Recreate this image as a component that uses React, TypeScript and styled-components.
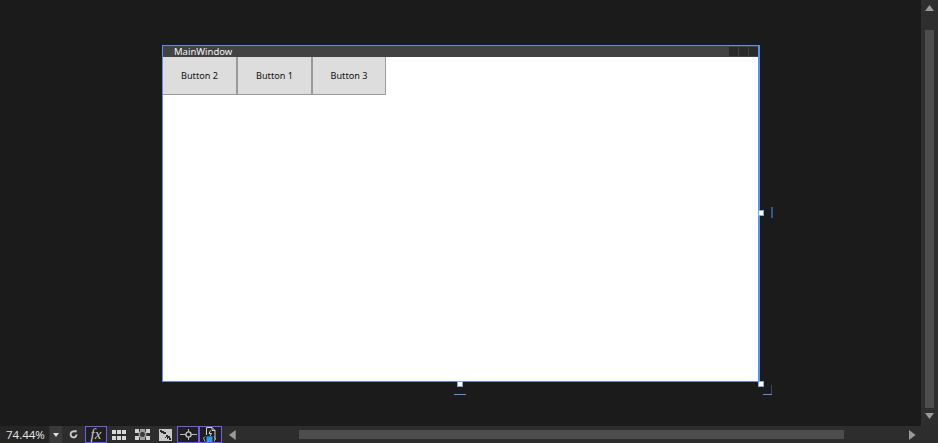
import { createGlobalStyle, styled } from "styled-components";

const GlobalStyle = createGlobalStyle`
  html, body, #root {
    margin: 0;
    height: 100%;
    overflow: hidden;
    background: #1b1b1c;
  }
`;

const Shell = styled.div`
  display: grid;
  grid-template-columns: 1fr 17px;
  grid-template-rows: 1fr 17px;
  width: 938px;
  height: 443px;
  font-family: "Open Sans", "Liberation Sans", sans-serif;
`;

const Canvas = styled.div`
  position: relative;
  background: #1b1b1c;
  overflow: hidden;
`;

const DesignWindow = styled.div`
  position: absolute;
  left: 162px;
  top: 45px;
  width: 595px;
  height: 335px;
  display: flex;
  flex-direction: column;
  border: 1px solid #5b8fe8;
  border-right-width: 2px;
  background: #fff;
`;

const TitleBar = styled.div`
  display: flex;
  align-items: center;
  justify-content: space-between;
  height: 11px;
  padding: 0 0 0 11px;
  background: #424243;
`;

const Title = styled.span`
  font-family: "Noto Sans", "Open Sans", sans-serif;
  font-size: 9.5px;
  line-height: 11px;
  color: #f4f4f4;
`;

const Controls = styled.div`
  display: flex;
  gap: 1px;
  height: 9px;
`;

const Control = styled.span`
  width: 9px;
  height: 9px;
  background: #2a2a2b;
`;

const ButtonRow = styled.div`
  display: flex;
`;

const DesignButton = styled.div<{ $width: number }>`
  box-sizing: border-box;
  width: ${(p) => p.$width}px;
  height: 38px;
  display: flex;
  align-items: center;
  justify-content: center;
  background: #dddddd;
  border: 1px solid #9a9a9a;
  border-width: 0 1px 1px 0;
  color: #111;
  font-family: "Noto Sans", "Open Sans", sans-serif;
  font-size: 9.1px;

  & + & {
    border-left-width: 1px;
  }
`;

const Handle = styled.span<{ $x: number; $y: number }>`
  position: absolute;
  left: ${(p) => p.$x}px;
  top: ${(p) => p.$y}px;
  box-sizing: border-box;
  width: 6px;
  height: 6px;
  background: #fff;
  border: 1px solid #7ea6ea;
`;

const Marker = styled.span<{ $x: number; $y: number; $w: number; $h: number; $tone?: string }>`
  position: absolute;
  left: ${(p) => p.$x}px;
  top: ${(p) => p.$y}px;
  width: ${(p) => p.$w}px;
  height: ${(p) => p.$h}px;
  background: ${(p) => p.$tone ?? "#5b8fe8"};
`;

const VerticalBar = styled.div`
  display: flex;
  flex-direction: column;
  align-items: center;
  background: #2e2e2f;
`;

const VerticalThumb = styled.div`
  width: 9px;
  height: 378px;
  margin-top: 14px;
  background: #4d4d4f;
`;

const ArrowSlot = styled.div`
  display: flex;
  align-items: center;
  justify-content: center;
  height: 16px;
`;

const StatusBar = styled.div`
  display: flex;
  align-items: center;
  background: #2d2d2e;
  color: #e8e8e8;
`;

const Zoom = styled.div`
  display: flex;
  align-items: center;
  height: 17px;
  width: 62px;
  background: #333334;
`;

const ZoomValue = styled.span`
  width: 49px;
  padding-left: 6px;
  box-sizing: border-box;
  font-family: "Open Sans", "Liberation Sans", sans-serif;
  font-size: 11.5px;
  line-height: 17px;
  color: #e6e6e6;
  background: #252526;
`;

const ZoomDrop = styled.span`
  display: flex;
  flex: 1;
  align-items: center;
  justify-content: center;
  height: 17px;
  background: #3a3a3b;
  margin-left: 1px;
`;

const Tool = styled.div<{ $active?: boolean; $w?: number }>`
  box-sizing: border-box;
  width: ${(p) => p.$w ?? 21}px;
  height: 17px;
  display: flex;
  align-items: center;
  justify-content: center;
  border: 1px solid ${(p) => (p.$active ? "#6f5fe6" : "transparent")};
  background: ${(p) => (p.$active ? "#1f1f22" : "transparent")};
`;

const Fx = styled.span`
  font-family: "Liberation Serif", serif;
  font-style: italic;
  font-size: 15px;
  line-height: 15px;
  color: #c8c8c8;
`;

const HorizontalTrack = styled.div`
  display: flex;
  flex: 1;
  align-items: center;
  margin-left: 7px;
  padding-right: 5px;
  height: 17px;
`;

const HorizontalThumb = styled.div`
  width: 545px;
  height: 9px;
  margin: 0 auto 0 63px;
  background: #4d4d4f;
`;

const Corner = styled.div`
  background: #2d2d2e;
`;

const Tri = ({ dir, size = 8, fill = "#9a9a9a" }: { dir: "up" | "down" | "left" | "right"; size?: number; fill?: string }) => {
  const points = {
    up: "0,8 6,0 12,8",
    down: "0,0 12,0 6,8",
    left: "8,0 8,12 0,6",
    right: "0,0 0,12 8,6",
  }[dir];
  const wide = dir === "up" || dir === "down";
  return (
    <svg
      width={wide ? size : (size * 2) / 3}
      height={wide ? (size * 2) / 3 : size}
      viewBox={wide ? "0 0 12 8" : "0 0 8 12"}
    >
      <polygon points={points} fill={fill} />
    </svg>
  );
};

const GridIcon = () => (
  <svg width="14" height="10" viewBox="0 0 14 10" fill="#d8d8d8">
    <rect x="0" y="0" width="4" height="4" />
    <rect x="5" y="0" width="4" height="4" />
    <rect x="10" y="0" width="4" height="4" />
    <rect x="0" y="6" width="4" height="4" />
    <rect x="5" y="6" width="4" height="4" />
    <rect x="10" y="6" width="4" height="4" />
  </svg>
);

const SnapIcon = () => (
  <svg width="15" height="11" viewBox="0 0 15 11">
    <path d="M0 0h4v4H0zM11 0h4v4h-4zM0 7h4v4H0zM11 7h4v4h-4z" fill="#d0d0d0" />
    <path d="M5 0h5v2H5zM5 9h5v2H5z" fill="#a0a0a0" />
    <circle cx="7.5" cy="5.5" r="3.2" fill="none" stroke="#9a9a9a" strokeWidth="1.6" />
    <circle cx="7.5" cy="5.5" r="1.1" fill="#4a4a4a" />
  </svg>
);

const CheckerIcon = () => (
  <svg width="13" height="12" viewBox="0 0 13 12">
    <rect width="13" height="12" fill="#c8c8c8" />
    <path
      d="M1 1h2v2H1zM3 2h2v2H3zM2 3h1v1H2zM5 3h2v2H5zM4 4h1v1H4zM7 6h2v2H7zM9 7h2v2H9zM8 8h1v2H8zM10 9h2v2h-2zM6 8h1v1H6z"
      fill="#2a2a2a"
    />
  </svg>
);

const RefreshIcon = () => (
  <svg width="9" height="9" viewBox="0 0 9 9" fill="none">
    <path d="M5.8 1.6A3 3 0 1 0 7.6 4.5" stroke="#d0d0d0" strokeWidth="1.8" />
    <path d="M5 0L8 .4 7 3z" fill="#d0d0d0" />
  </svg>
);

const EffectIcon = () => (
  <svg width="17" height="13" viewBox="0 0 17 13" fill="none">
    <path d="M0 6.5h17M8.5 1v11" stroke="#b8b8b8" />
    <circle cx="8.5" cy="6.5" r="2.6" fill="#1f1f22" stroke="#c8c8c8" strokeWidth="1.3" />
  </svg>
);

const DocumentIcon = () => (
  <svg width="15" height="15" viewBox="0 0 15 15" fill="none">
    <path d="M3.5 8V.5H9L12 3.5V13" stroke="#d0d0d0" />
    <path d="M9 .5v3h3" stroke="#d0d0d0" />
    <path d="M7.5 3.5L6 6.5h2.5L7 9" stroke="#d0d0d0" />
    <path d="M2 9.5L.5 11 2 14.5M11 9.5l1.5 2L11 14.5" stroke="#a8a8a8" />
    <rect x="3.5" y="9.5" width="6" height="5.5" fill="#2f9be8" />
  </svg>
);

export default function App() {
  return (
    <>
      <GlobalStyle />
      <Shell>
        <Canvas>
          <DesignWindow>
            <TitleBar>
              <Title>MainWindow</Title>
              <Controls>
                <Control />
                <Control />
                <Control />
              </Controls>
            </TitleBar>
            <ButtonRow>
              <DesignButton $width={74}>Button 2</DesignButton>
              <DesignButton $width={75}>Button 1</DesignButton>
              <DesignButton $width={74}>Button 3</DesignButton>
            </ButtonRow>
          </DesignWindow>
          <Handle $x={758} $y={210} />
          <Handle $x={457} $y={381} />
          <Handle $x={758} $y={381} />
          <Marker $x={771} $y={207} $w={2} $h={11} $tone="#34558c" />
          <Marker $x={454} $y={394} $w={12} $h={1} />
          <Marker $x={763} $y={394} $w={9} $h={1} />
          <Marker $x={771} $y={385} $w={1} $h={9} $tone="#3a4a66" />
        </Canvas>
        <VerticalBar>
          <ArrowSlot>
            <Tri dir="up" size={9} />
          </ArrowSlot>
          <VerticalThumb />
          <ArrowSlot>
            <Tri dir="down" size={9} />
          </ArrowSlot>
        </VerticalBar>
        <StatusBar>
          <Zoom>
            <ZoomValue>74.44%</ZoomValue>
            <ZoomDrop>
              <Tri dir="down" size={6} fill="#e0e0e0" />
            </ZoomDrop>
          </Zoom>
          <Tool $w={23}>
            <RefreshIcon />
          </Tool>
          <Tool $active $w={22}>
            <Fx>fx</Fx>
          </Tool>
          <Tool $w={24}>
            <GridIcon />
          </Tool>
          <Tool $w={23}>
            <SnapIcon />
          </Tool>
          <Tool $w={23}>
            <CheckerIcon />
          </Tool>
          <Tool $active $w={22}>
            <EffectIcon />
          </Tool>
          <Tool $active $w={23}>
            <DocumentIcon />
          </Tool>
          <HorizontalTrack>
            <Tri dir="left" size={10} />
            <HorizontalThumb />
            <Tri dir="right" size={10} />
          </HorizontalTrack>
        </StatusBar>
        <Corner />
      </Shell>
    </>
  );
}
